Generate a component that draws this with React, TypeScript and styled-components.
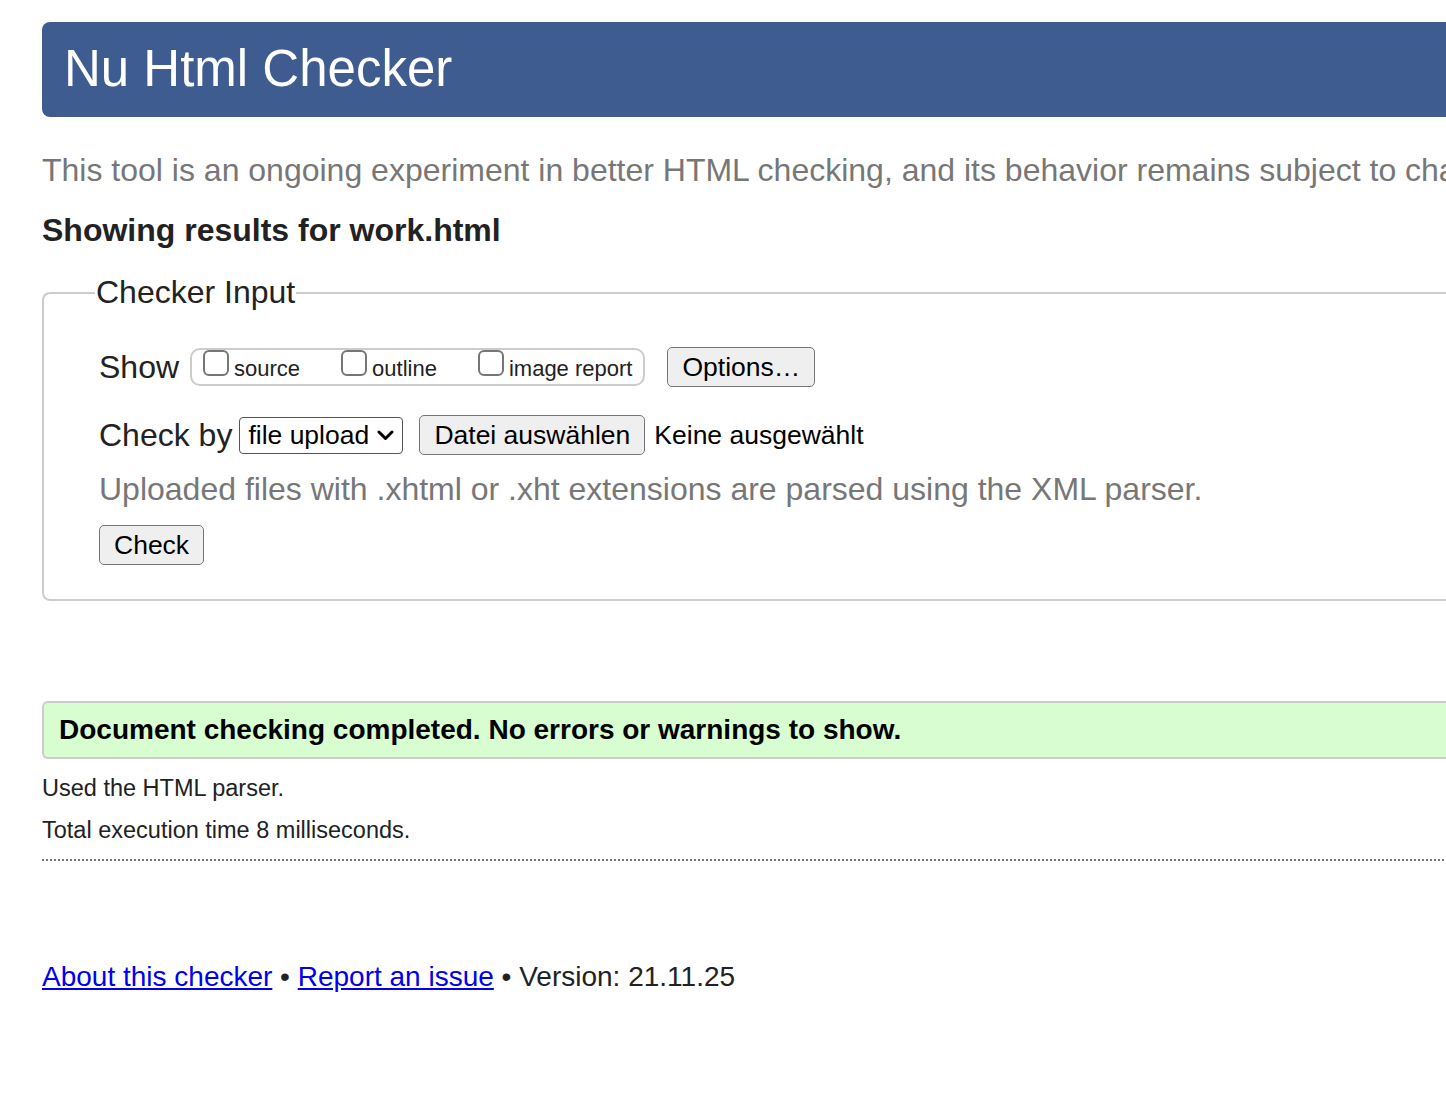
import React from "react";
import styled, { createGlobalStyle } from "styled-components";

const GlobalStyle = createGlobalStyle`
  html, body {
    margin: 0;
    padding: 0;
    background: #ffffff;
    overflow: hidden;
  }
  body {
    font-family: "Liberation Sans", Arial, Helvetica, sans-serif;
    color: #222222;
  }
`;

const Page = styled.div`
  width: 1760px;
  padding: 22px 0 60px 42px;
  box-sizing: border-box;
`;

const Header = styled.header`
  height: 95px;
  display: flex;
  align-items: center;
  padding-left: 22px;
  background: #3e5c8f;
  border-radius: 8px 0 0 8px;
`;

const Title = styled.h1`
  margin: 0;
  font-size: 51px;
  font-weight: 400;
  color: #ffffff;
  line-height: 1;
  padding-bottom: 2px;
`;

const Intro = styled.p`
  margin: 34px 0 0;
  font-size: 32px;
  line-height: 38px;
  color: #777777;
  white-space: nowrap;
`;

const ResultsFor = styled.h2`
  margin: 22px 0 0;
  font-size: 32px;
  line-height: 38px;
  font-weight: 700;
  color: #222222;
`;

const InputSet = styled.fieldset`
  margin: 25px 0 0;
  padding: 36px 0 34px 55px;
  border: 2px solid #cccccc;
  border-right: none;
  border-radius: 8px 0 0 8px;
  min-width: 0;
`;

const Legend = styled.legend`
  margin-left: -4px;
  padding: 0 1px;
  font-size: 32px;
  line-height: 37px;
  color: #222222;
`;

const Row = styled.div<{ $gap?: number }>`
  display: flex;
  align-items: center;
  margin-top: ${(p) => p.$gap ?? 0}px;
`;

const Label = styled.span`
  font-size: 32px;
  line-height: 38px;
  color: #222222;
`;

const ShowGroup = styled.div`
  display: flex;
  align-items: flex-start;
  gap: 41px;
  height: 34px;
  margin-left: 11px;
  padding: 0 11px;
  border: 2px solid #cccccc;
  border-radius: 10px;
`;

const ShowItem = styled.label`
  display: flex;
  align-items: flex-start;
  gap: 5px;
`;

const Box = styled.input`
  appearance: none;
  width: 26px;
  height: 26px;
  margin: 0;
  border: 2px solid #767676;
  border-radius: 6px;
  background: #ffffff;
  box-sizing: border-box;
`;

const ItemText = styled.span`
  font-size: 22px;
  line-height: 26px;
  margin-top: 6px;
  color: #222222;
`;

const Button = styled.button<{ $left?: number }>`
  height: 40px;
  margin: 0 0 0 ${(p) => p.$left ?? 0}px;
  padding: 0 14px;
  font-family: "Liberation Sans", Arial, Helvetica, sans-serif;
  font-size: 26.5px;
  color: #000000;
  background: #efefef;
  border: 1.5px solid #767676;
  border-radius: 5px;
`;

const SelectWrap = styled.div`
  position: relative;
  margin-left: 7px;
`;

const Select = styled.select`
  appearance: none;
  width: 164px;
  height: 37px;
  padding: 0 0 0 8px;
  font-family: "Liberation Sans", Arial, Helvetica, sans-serif;
  font-size: 26.5px;
  color: #000000;
  background: #ffffff;
  border: 1.5px solid #555555;
  border-radius: 4px;
`;

const Chevron = styled.svg`
  position: absolute;
  right: 9px;
  top: 13px;
  pointer-events: none;
`;

const FileName = styled.span`
  margin-left: 9px;
  font-size: 26.5px;
  color: #000000;
`;

const Hint = styled.p`
  margin: 15px 0 0;
  font-size: 32px;
  line-height: 38px;
  color: #777777;
`;

const Result = styled.div`
  margin-top: 100px;
  height: 54px;
  display: flex;
  align-items: center;
  padding-left: 15px;
  background: #d8fdd0;
  border: 2px solid #cccccc;
  border-right: none;
  border-radius: 6px 0 0 6px;
  font-size: 28px;
  font-weight: 700;
  color: #000000;
`;

const Detail = styled.p<{ $gap: number }>`
  margin: ${(p) => p.$gap}px 0 0;
  font-size: 23.5px;
  line-height: 28px;
  color: #222222;
`;

const Rule = styled.hr`
  margin: 15px 0 0;
  border: none;
  border-top: 2px dotted #777777;
  height: 0;
`;

const Footer = styled.p`
  margin: 99px 0 0;
  font-size: 28px;
  line-height: 34px;
  color: #222222;
`;

const Link = styled.a`
  color: #0000ee;
  text-decoration: underline;
`;

const showOptions = ["source", "outline", "image report"];

export default function App() {
  return (
    <>
      <GlobalStyle />
      <Page>
        <Header>
          <Title>Nu Html Checker</Title>
        </Header>
        <Intro>
          This tool is an ongoing experiment in better HTML checking, and its behavior remains subject to change.
        </Intro>
        <ResultsFor>Showing results for work.html</ResultsFor>

        <InputSet>
          <Legend>Checker Input</Legend>
          <Row>
            <Label>Show</Label>
            <ShowGroup>
              {showOptions.map((name) => (
                <ShowItem key={name}>
                  <Box type="checkbox" />
                  <ItemText>{name}</ItemText>
                </ShowItem>
              ))}
            </ShowGroup>
            <Button $left={22}>Options…</Button>
          </Row>
          <Row $gap={28}>
            <Label>Check by</Label>
            <SelectWrap>
              <Select defaultValue="file">
                <option value="file">file upload</option>
                <option value="address">address</option>
                <option value="text">text input</option>
              </Select>
              <Chevron width="17" height="11" viewBox="0 0 17 11">
                <path d="M2 2 L8.5 8.5 L15 2" fill="none" stroke="#000" strokeWidth="3" strokeLinecap="round" strokeLinejoin="round" />
              </Chevron>
            </SelectWrap>
            <Button $left={16}>Datei auswählen</Button>
            <FileName>Keine ausgewählt</FileName>
          </Row>
          <Hint>Uploaded files with .xhtml or .xht extensions are parsed using the XML parser.</Hint>
          <Row $gap={17}>
            <Button>Check</Button>
          </Row>
        </InputSet>

        <Result>Document checking completed. No errors or warnings to show.</Result>
        <Detail $gap={15}>Used the HTML parser.</Detail>
        <Detail $gap={14}>Total execution time 8 milliseconds.</Detail>
        <Rule />
        <Footer>
          <Link href="#about">About this checker</Link> • <Link href="#issue">Report an issue</Link> • Version: 21.11.25
        </Footer>
      </Page>
    </>
  );
}
